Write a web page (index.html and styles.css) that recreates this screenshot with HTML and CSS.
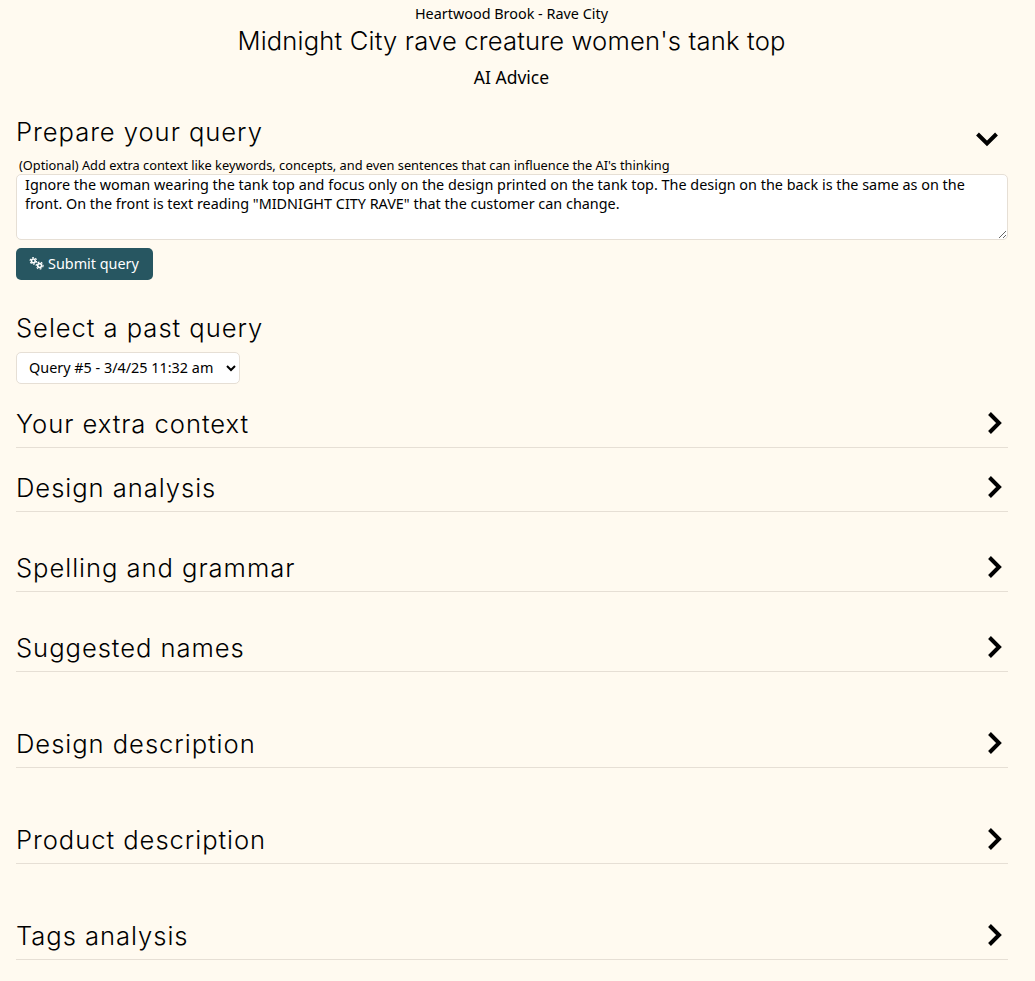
FILE: index.html
```html
<!DOCTYPE html>
<html lang="en">
<head>
    <meta charset="UTF-8">
    <meta name="viewport" content="width=device-width, initial-scale=1.0">
    <title>AI Advice</title>
    <link rel="stylesheet" href="styles.css">
</head>
<body>
    <header class="page-head">
        <div class="shop-name">Heartwood Brook - Rave City</div>
        <h1>Midnight City rave creature women's tank top</h1>
        <div class="page-name">AI Advice</div>
    </header>

    <section class="query-panel">
        <div class="query-head">
            <h2>Prepare your query</h2>
            <svg class="chevron chevron-down" viewBox="0 0 24 24"><path d="M2.5 7l9.5 9.5L21.5 7"/></svg>
        </div>
        <label class="query-label" for="context">(Optional) Add extra context like keywords, concepts, and even sentences that can influence the AI's thinking</label>
        <textarea id="context" class="query-input">Ignore the woman wearing the tank top and focus only on the design printed on the tank top. The design on the back is the same as on the front. On the front is text reading "MIDNIGHT CITY RAVE" that the customer can change.</textarea>
        <button type="button" class="submit-button">
            <svg class="gears" viewBox="0 0 16 14">
                <circle class="gear-ring" cx="4.6" cy="4.2" r="2"/>
                <circle class="gear-teeth" cx="4.6" cy="4.2" r="3.5"/>
                <circle class="gear-ring" cx="11.4" cy="9.2" r="2.1"/>
                <circle class="gear-teeth" cx="11.4" cy="9.2" r="3.7"/>
            </svg>
            Submit query
        </button>
    </section>

    <section class="past-panel">
        <h2>Select a past query</h2>
        <select class="past-select">
            <option>Query #5 - 3/4/25 11:32 am</option>
        </select>
    </section>

    <section class="result-row row-first">
        <h2>Your extra context</h2>
        <svg class="chevron" viewBox="0 0 24 24"><path d="M7.5 2.5l9.5 9.5-9.5 9.5"/></svg>
    </section>
    <section class="result-row row-short">
        <h2>Design analysis</h2>
        <svg class="chevron" viewBox="0 0 24 24"><path d="M7.5 2.5l9.5 9.5-9.5 9.5"/></svg>
    </section>
    <section class="result-row row-mid">
        <h2>Spelling and grammar</h2>
        <svg class="chevron" viewBox="0 0 24 24"><path d="M7.5 2.5l9.5 9.5-9.5 9.5"/></svg>
    </section>
    <section class="result-row row-mid">
        <h2>Suggested names</h2>
        <svg class="chevron" viewBox="0 0 24 24"><path d="M7.5 2.5l9.5 9.5-9.5 9.5"/></svg>
    </section>
    <section class="result-row row-tall">
        <h2>Design description</h2>
        <svg class="chevron" viewBox="0 0 24 24"><path d="M7.5 2.5l9.5 9.5-9.5 9.5"/></svg>
    </section>
    <section class="result-row row-tall">
        <h2>Product description</h2>
        <svg class="chevron" viewBox="0 0 24 24"><path d="M7.5 2.5l9.5 9.5-9.5 9.5"/></svg>
    </section>
    <section class="result-row row-tall">
        <h2>Tags analysis</h2>
        <svg class="chevron" viewBox="0 0 24 24"><path d="M7.5 2.5l9.5 9.5-9.5 9.5"/></svg>
    </section>
</body>
</html>
```

FILE: styles.css
```css
html {
    background-color: #fffaf0;
}
body {
    margin: 0;
    padding: 0 27px 20px 16px;
    font-family: "Noto Sans", sans-serif;
    font-size: 14.4px;
    color: #000;
    background-color: #fffaf0;
}
h1, h2 {
    margin: 0;
    font-family: Inter, sans-serif;
    font-weight: 300;
}
h2 {
    font-size: 25.6px;
    line-height: 32px;
    letter-spacing: 0.95px;
}
.page-head {
    margin-right: -15px;
    margin-left: -16px;
    padding-top: 4px;
    text-align: center;
}
.shop-name {
    line-height: 19px;
}
.page-head h1 {
    margin-top: 2px;
    font-size: 25.6px;
    line-height: 32px;
    letter-spacing: 0.17px;
}
.page-name {
    margin-top: 8px;
    font-size: 17.5px;
    line-height: 24px;
}
.query-panel {
    margin-top: 27px;
}
.query-head {
    display: flex;
    justify-content: space-between;
    height: 32px;
}
.chevron {
    flex: none;
    width: 24px;
    height: 24px;
    margin-right: 2px;
    fill: none;
    stroke: #000;
    stroke-width: 4;
}
.chevron-down {
    margin-top: 11px;
    margin-right: 9px;
}
.query-label {
    display: block;
    margin-top: 8px;
    padding-left: 3px;
    font-size: 12.8px;
    line-height: 18px;
}
.query-input {
    display: block;
    box-sizing: border-box;
    width: 100%;
    height: 66px;
    padding: 0 8px;
    border: 1px solid #e6dfd5;
    border-radius: 5px;
    background-color: #fff;
    font-family: "Noto Sans", sans-serif;
    font-size: 14.4px;
    line-height: 19.2px;
    color: #000;
}
.submit-button {
    display: flex;
    align-items: center;
    gap: 4px;
    height: 32px;
    margin-top: 8px;
    padding: 0 14px 2px 13px;
    border: 0;
    border-radius: 5px;
    background-color: #275661;
    font-family: "Noto Sans", sans-serif;
    font-size: 14.4px;
    color: #fff;
}
.gears {
    width: 15px;
    height: 13px;
}
.gear-ring {
    fill: none;
    stroke: #fff;
    stroke-width: 1.7;
}
.gear-teeth {
    fill: none;
    stroke: #fff;
    stroke-width: 1.2;
    stroke-dasharray: 2 1.66;
}
.past-panel {
    margin-top: 32px;
}
.past-select {
    display: block;
    width: 224px;
    height: 32px;
    margin-top: 8px;
    padding: 0 8px 2px;
    border: 1px solid #e6dfd5;
    border-radius: 5px;
    background-color: #fff;
    font-family: "Noto Sans", sans-serif;
    font-size: 14.4px;
    color: #000;
}
.result-row {
    display: flex;
    align-items: flex-end;
    justify-content: space-between;
    box-sizing: border-box;
    padding-bottom: 7px;
    border-bottom: 1px solid #e6dfd5;
}
.result-row .chevron {
    margin-bottom: 5px;
}
.row-first {
    height: 64px;
}
.row-short {
    height: 64px;
}
.row-mid {
    height: 80px;
}
.row-tall {
    height: 96px;
}
```
